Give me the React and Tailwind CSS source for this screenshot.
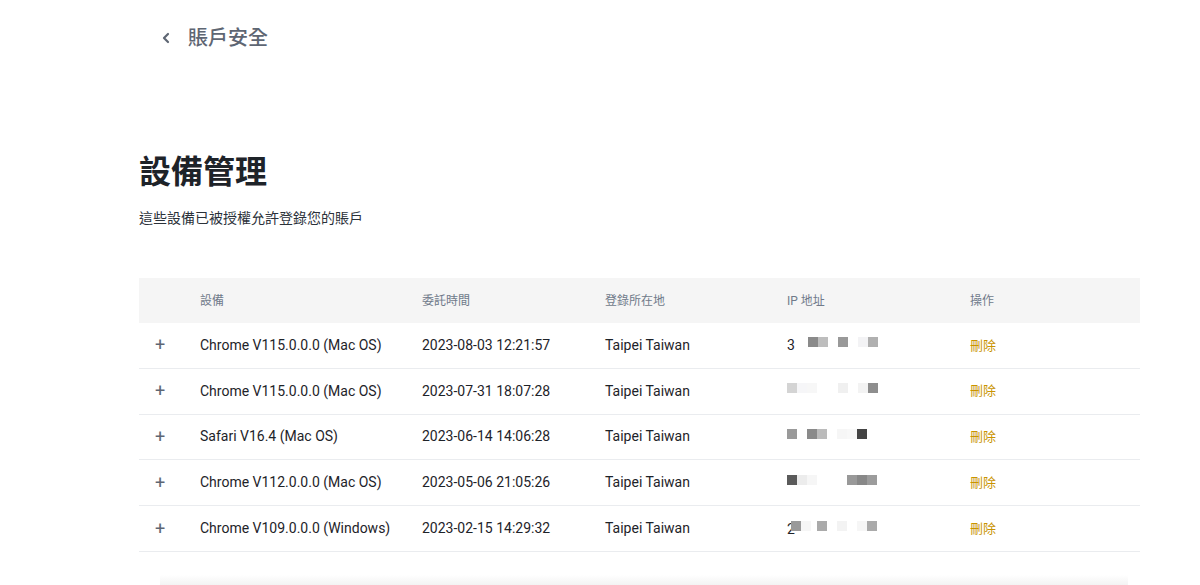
import React from "react";

const rows = [
  {
    device: "Chrome V115.0.0.0 (Mac OS)",
    time: "2023-08-03 12:21:57",
    lead: "3",
    blocks: [
      [21, "#8a8a8a"],
      [31, "#bdbdbd"],
      [51, "#999999"],
      [71, "#f3f3f5"],
      [81, "#b0b0b0"],
    ],
  },
  {
    device: "Chrome V115.0.0.0 (Mac OS)",
    time: "2023-07-31 18:07:28",
    lead: "",
    blocks: [
      [0, "#d4d4d4"],
      [10, "#f6f6f8"],
      [20, "#f7f7f7"],
      [51, "#f0f0f0"],
      [71, "#f3f3f3"],
      [81, "#8e8e8e"],
    ],
  },
  {
    device: "Safari V16.4 (Mac OS)",
    time: "2023-06-14 14:06:28",
    lead: "",
    blocks: [
      [0, "#9a9a9a"],
      [20, "#8a8a8a"],
      [30, "#bbbbbb"],
      [50, "#f6f6f6"],
      [60, "#f8f8f8"],
      [70, "#444444"],
    ],
  },
  {
    device: "Chrome V112.0.0.0 (Mac OS)",
    time: "2023-05-06 21:05:26",
    lead: "",
    blocks: [
      [0, "#5a5a5a"],
      [10, "#ececec"],
      [20, "#f6f6f6"],
      [60, "#999999"],
      [70, "#888888"],
      [80, "#9c9c9c"],
    ],
  },
  {
    device: "Chrome V109.0.0.0 (Windows)",
    time: "2023-02-15 14:29:32",
    lead: "2",
    blocks: [
      [4, "#9a9a9a"],
      [14, "#f6f6f6"],
      [30, "#aaaaaa"],
      [50, "#f3f3f3"],
      [70, "#f6f6f6"],
      [80, "#aaaaaa"],
    ],
  },
];

function Ip({ lead, blocks }) {
  return (
    <div className="relative h-[20px] w-[100px]">
      {lead && (
        <span className="absolute left-0 top-0 text-[14px] leading-[20px] text-[#1e2329]">{lead}</span>
      )}
      {blocks.map(([x, c], i) => (
        <span
          key={i}
          className="absolute top-[2px] h-[10px] w-[10px]"
          style={{ left: x, backgroundColor: c }}
        />
      ))}
    </div>
  );
}

export default function App() {
  const font = { fontFamily: 'Roboto, "Noto Sans CJK TC", sans-serif' };
  return (
    <div className="relative h-[585px] w-[1200px] overflow-hidden bg-white" style={font}>
      <div className="ml-[139px] w-[1001px]">
        <div className="flex h-[76px] items-center pl-[22px]">
          <svg width="10" height="12" viewBox="0 0 10 12" className="mr-[17px]">
            <path d="M7 2 L3 6 L7 10" fill="none" stroke="#5e6673" strokeWidth="2.2" strokeLinecap="round" strokeLinejoin="round" />
          </svg>
          <span className="text-[20px] font-medium leading-[28px] text-[#5e6673]">賬戶安全</span>
        </div>
        <h1 className="mt-[76px] text-[32px] font-bold leading-[40px] text-[#1e2329]">設備管理</h1>
        <p className="mt-[16px] text-[14px] leading-[20px] text-[#2b3139]">這些設備已被授權允許登錄您的賬戶</p>
        <div className="mt-[50px]">
          <div className="grid h-[45px] grid-cols-[61px_222px_183px_182px_183px_1fr] items-center bg-[#f5f5f5] text-[12px] text-[#707a8a]">
            <div />
            <div>設備</div>
            <div>委託時間</div>
            <div>登錄所在地</div>
            <div>IP 地址</div>
            <div>操作</div>
          </div>
          {rows.map((r, i) => (
            <div
              key={i}
              className="grid h-[45.8px] grid-cols-[61px_222px_183px_182px_183px_1fr] items-center border-b border-[#eaecef] text-[14px] text-[#1e2329]"
            >
              <div className="pl-[16px] text-[18px] leading-none text-[#5e6673]">+</div>
              <div>{r.device}</div>
              <div>{r.time}</div>
              <div>Taipei Taiwan</div>
              <Ip lead={r.lead} blocks={r.blocks} />
              <div className="text-[13px] text-[#c99400]">刪除</div>
            </div>
          ))}
        </div>
      </div>
      <div className="absolute bottom-0 left-[160px] h-[10px] w-[968px] bg-gradient-to-b from-white to-[#f3f3f3]" />
    </div>
  );
}
